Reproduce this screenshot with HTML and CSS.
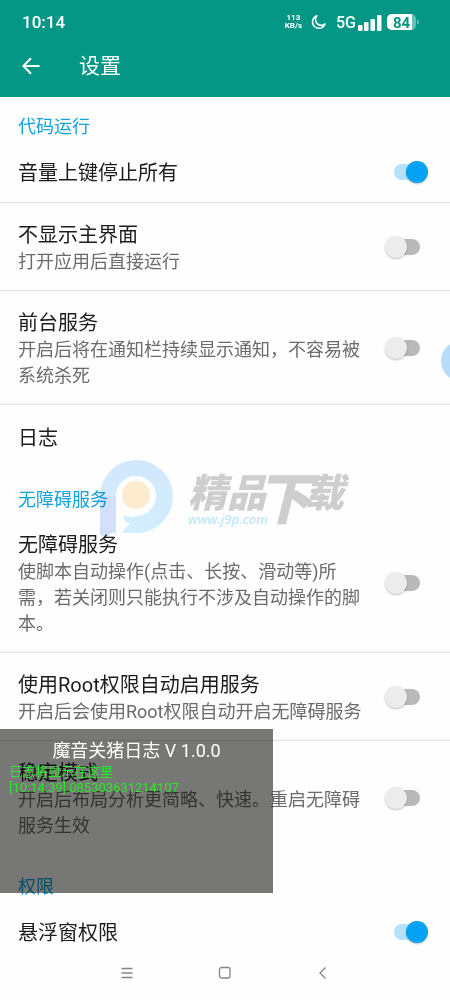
FILE: index.html
```html
<!DOCTYPE html>
<html lang="zh-CN">
<head>
<meta charset="utf-8">
<meta name="viewport" content="width=device-width, initial-scale=1">
<title>设置</title>
<link rel="stylesheet" href="styles.css">
</head>
<body>
<div class="screen">
  <header class="header">
    <div class="status">
      <span class="time">10:14</span>
      <span class="speed"><span>113</span><span>KB/s</span></span>
      <svg class="moon" width="16" height="16" viewBox="0 0 16 16" aria-hidden="true"><path d="M6 1.8A6.4 6.4 0 1 0 14 9.9 5.7 5.7 0 0 1 6 1.8Z"/></svg>
      <span class="network">5G</span>
      <svg class="bars" width="24" height="17" viewBox="0 0 24 17" aria-hidden="true"><rect x="0" y="11" width="4.500" height="6" rx="1"/><rect x="6" y="8" width="4.500" height="9" rx="1"/><rect x="12.500" y="5" width="4.500" height="12" rx="1"/><rect x="19" y="1" width="4.500" height="16" rx="1"/></svg>
      <svg class="battery" width="34" height="16" viewBox="0 0 34 16" role="img" aria-label="84%">
        <rect class="shell" x="0" width="29" height="16" rx="5"/>
        <path class="fill" d="M5 0H25V16H5A5 5 0 0 1 0 11V5A5 5 0 0 1 5 0Z"/>
        <path class="shell" d="M30 5.5Q32 6 32 8T30 10.500Z"/>
        <text x="14.500" y="13.500">84</text>
      </svg>
    </div>
    <div class="appbar">
      <button class="back" aria-label="返回"><svg width="18" height="18" viewBox="0 0 18 18"><path d="M17.500 9H1.500M9 1.300 1.300 9 9 16.700"/></svg></button>
      <h1 class="heading">设置</h1>
    </div>
  </header>

  <main class="settings">
    <section class="group">
      <h2 class="category">代码运行</h2>
      <label class="row"><span class="text"><span class="title">音量上键停止所有</span></span><input class="switch" type="checkbox" role="switch" checked></label>
      <label class="row"><span class="text"><span class="title">不显示主界面</span><span class="summary">打开应用后直接运行</span></span><input class="switch" type="checkbox" role="switch"></label>
      <label class="row"><span class="text"><span class="title">前台服务</span><span class="summary">开启后将在通知栏持续显示通知，不容易被系统杀死</span></span><input class="switch" type="checkbox" role="switch"></label>
      <a class="row" href="#log"><span class="text"><span class="title">日志</span></span></a>
    </section>
    <section class="group">
      <h2 class="category">无障碍服务</h2>
      <label class="row"><span class="text"><span class="title">无障碍服务</span><span class="summary">使脚本自动操作(点击、长按、滑动等)所需，若关闭则只能执行不涉及自动操作的脚本。</span></span><input class="switch" type="checkbox" role="switch"></label>
      <label class="row"><span class="text"><span class="title">使用Root权限自动启用服务</span><span class="summary">开启后会使用Root权限自动开启无障碍服务</span></span><input class="switch" type="checkbox" role="switch"></label>
      <label class="row"><span class="text"><span class="title">稳定模式</span><span class="summary">开启后布局分析更简略、快速。重启无障碍服务生效</span></span><input class="switch" type="checkbox" role="switch"></label>
    </section>
    <section class="group">
      <h2 class="category">权限</h2>
      <label class="row"><span class="text"><span class="title">悬浮窗权限</span></span><input class="switch" type="checkbox" role="switch" checked></label>
    </section>
  </main>

  <nav class="navbar">
    <button class="key" aria-label="菜单"><svg width="14" height="14" viewBox="0 0 14 14"><path d="M1.500 2.500H12.500M1.500 7H12.500M1.500 11.500H12.500"/></svg></button>
    <button class="key" aria-label="主页"><svg width="14" height="14" viewBox="0 0 14 14"><rect x="1.500" y="1.500" width="10.500" height="10.500" rx="2"/></svg></button>
    <button class="key" aria-label="返回"><svg width="14" height="14" viewBox="0 0 14 14"><path d="M9.500 1.500 4 7 9.500 12.500"/></svg></button>
  </nav>

  <div class="watermark">
    <svg class="mark" width="76" height="82" viewBox="0 0 76 82" aria-hidden="true">
      <defs><linearGradient id="bowl" x1="0" y1="0" x2="0" y2="1"><stop offset="0" stop-color="#d3e8fd"/><stop offset="1" stop-color="#d3f0fe"/></linearGradient></defs>
      <path class="stem" d="M1 37V75Q4 80 9 77 13 71 17 75V37Z"/>
      <path fill="url(#bowl)" d="M1 37A36.500 36.500 0 1 1 37 74Q30 75 23 73 26 69 31 65 25 63 24 56 31 60 43 56A20 20 0 1 0 17 37Z"/>
      <circle class="core" cx="37" cy="36" r="14"/>
    </svg>
    <div class="brand">
      <div class="name"><span>精品</span><span class="tall">下</span><span>载</span></div>
      <div class="site">www.j9p.com</div>
    </div>
  </div>

  <button class="bubble" aria-label="悬浮按钮"></button>

  <aside class="console">
    <div class="console-title">魔音关猪日志 V 1.0.0</div>
    <div class="console-log">日志将显示在这里<br>[10:14:39] 085303631214107</div>
  </aside>
</div>
</body>
</html>
```
FILE: styles.css
```css
* { box-sizing: border-box; }
body { margin: 0; background: #fefefe; font-family: Roboto, "Noto Sans CJK SC", sans-serif; }
button { border: 0; padding: 0; background: none; font: inherit; }
h1, h2 { margin: 0; font-weight: 400; }

.screen { position: relative; display: flex; flex-direction: column; height: 100vh; overflow: hidden; }

.header { flex: none; background: #049786; color: #fff; }
.status { display: flex; align-items: center; height: 44px; padding: 0 29px 0 22px; }
.time { flex: 1; font-size: 17px; font-weight: 500; }
.speed { display: flex; flex-direction: column; align-items: center; font-size: 8px; line-height: 8px; font-weight: 700; margin-right: 9px; }
.moon { margin-right: 9px; fill: none; stroke: #fff; stroke-width: 1.5; stroke-linejoin: round; }
.network { font-size: 16px; margin-right: 2px; font-weight: 500; }
.bars { fill: #fff; margin-right: 5px; }
.battery { fill: #fff; }
.battery .shell { opacity: .4; }
.battery text { fill: #049786; font-size: 15px; font-weight: 700; text-anchor: middle; }
.appbar { display: flex; align-items: center; gap: 39px; height: 53px; padding: 0 22px 9px; }
.back { display: flex; }
.back svg { fill: none; stroke: #fff; stroke-width: 2; }
.heading { font-size: 21px; line-height: 30px; }

.settings { flex: 1; min-height: 0; overflow: hidden; }
.group + .group { margin-top: 2px; }
.category { padding: 17px 18px 0; font-size: 18px; line-height: 26px; color: #0fa3e0; }
.row { display: flex; align-items: center; justify-content: space-between; gap: 16px; min-height: 63px; padding: 18px 21px 15px 18px; border-bottom: 1px solid #dedede; color: #1c1c1c; text-decoration: none; }
.row:last-child { border-bottom-color: transparent; }
.text { display: flex; flex-direction: column; }
.title { font-size: 20px; line-height: 28px; }
.summary { font-size: 18px; line-height: 26px; color: #6b6b6b; }

.switch { appearance: none; position: relative; flex: none; width: 44px; height: 24px; margin: 0; }
.switch::before { content: ""; position: absolute; left: 9px; top: 3px; width: 26px; height: 16px; border-radius: 8px; background: #b9b9b9; }
.switch::after { content: ""; position: absolute; left: 0; top: 0; width: 22px; height: 22px; border-radius: 50%; background: #ececec; box-shadow: 0 1px 2px rgba(0, 0, 0, .25); }
.switch:checked::before { background: #b1e3fa; }
.switch:checked::after { left: 21px; background: #04a2f2; }

.navbar { flex: none; display: flex; justify-content: center; gap: 84px; height: 54px; background: #fefefe; }
.key { display: flex; align-items: center; }
.key svg { fill: none; stroke: #858585; stroke-width: 1.3; }

.watermark { position: absolute; left: 99px; top: 459px; display: flex; gap: 13px; pointer-events: none; mix-blend-mode: multiply; }
.mark .stem { fill: #d3e1fc; }
.mark .core { fill: #feebd0; }
.brand { position: relative; padding-top: 10px; color: #cfcfcf; font-style: italic; }
.name { display: flex; font-family: "Noto Sans CJK SC", sans-serif; font-size: 39px; line-height: 42px; font-weight: 900; }
.name .tall { font-size: 56px; line-height: 52px; margin: 0 -7px 0 -10px; }
.site { position: absolute; left: 0; top: 51px; font-family: "Open Sans", sans-serif; font-size: 13px; line-height: 18px; color: #bfe8fc; font-weight: 600; }

.bubble { position: absolute; right: -31px; top: 341px; width: 40px; height: 40px; border-radius: 50%; background: #b7dcfa; }

.console { position: absolute; left: 0; top: 729px; width: 273px; height: 164px; padding: 9px 9px 0; background: rgba(4, 4, 0, .54); color: #fff; }
.console-title { text-align: center; font-size: 18px; line-height: 26px; }
.console-log { font-size: 13px; line-height: 16px; color: #2fe52f; }
```
